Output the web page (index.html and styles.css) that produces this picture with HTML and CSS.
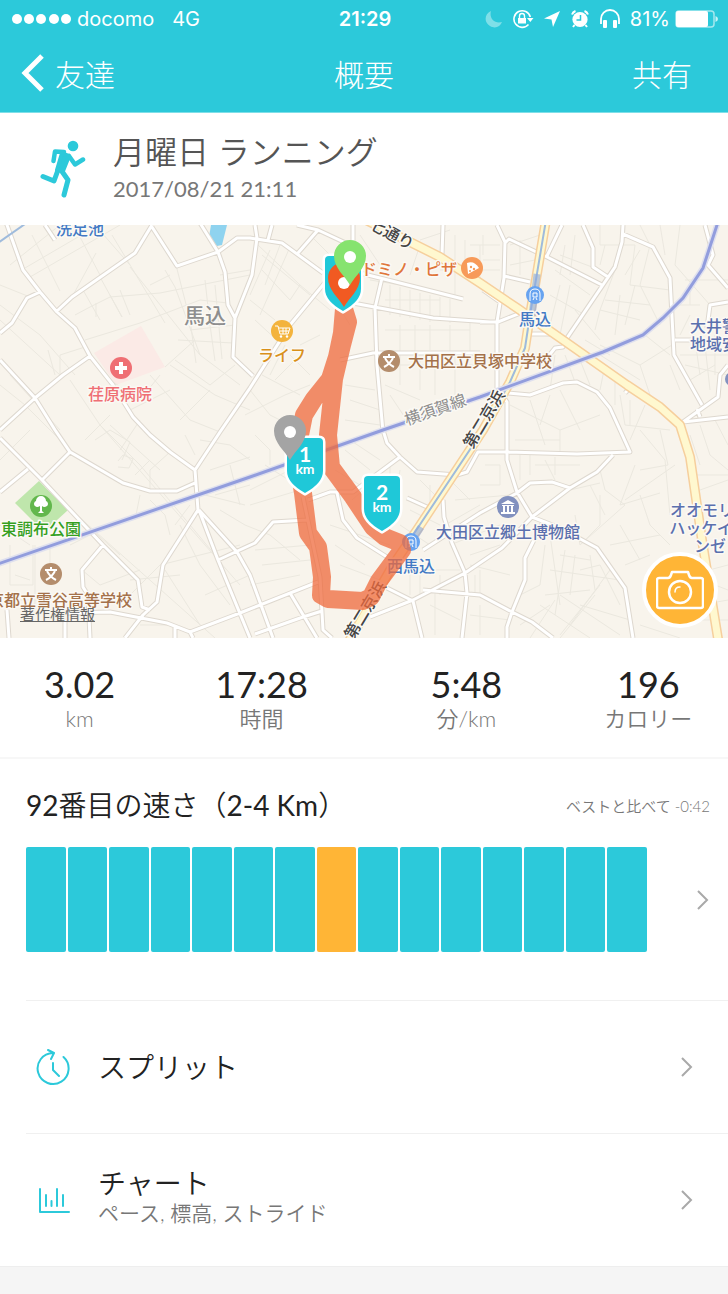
FILE: index.html
```html
<!DOCTYPE html>
<html lang="ja">
<head>
    <meta charset="UTF-8">
    <meta name="viewport" content="width=device-width, initial-scale=1.0">
    <title>概要</title>
    <link rel="stylesheet" href="styles.css">
</head>
<body>
    <header class="header">
        <div class="status">
            <div class="status-left">
                <svg width="60" height="12" viewBox="0 0 60 12" fill="#fff">
                    <circle cx="5" cy="6" r="5"/><circle cx="17" cy="6" r="5"/><circle cx="29" cy="6" r="5"/><circle cx="42" cy="6" r="5"/><circle cx="54" cy="6" r="5"/>
                </svg>
                <span class="carrier">docomo</span>
                <span>4G</span>
            </div>
            <div class="clock">21:29</div>
            <div class="status-right">
                <svg width="18" height="18" viewBox="0 0 18 18"><path d="M6 1C-1 4-1 13 5 16 10 19 15 17 17 12 9 14 4 8 6 1z" fill="#7fdfe8"/></svg>
                <svg width="22" height="20" viewBox="0 0 22 20" fill="none" stroke="#fff">
                    <path d="M16.500 15.500A8.300 8.300 0 1 1 18.300 8" stroke-width="1.600"/>
                    <path d="M15 9h6.500l-3.200 4z" fill="#fff" stroke="none"/>
                    <rect x="6" y="9" width="8" height="5.500" fill="#fff" stroke="none"/>
                    <path d="M7.500 9V7a2.500 2.500 0 0 1 5 0v2" stroke-width="1.400"/>
                </svg>
                <svg width="18" height="18" viewBox="0 0 18 18"><path d="M17 1L1 8.500l7.500 1L10 17z" fill="#fff"/></svg>
                <svg width="20" height="20" viewBox="0 0 20 20">
                    <circle cx="10" cy="10.500" r="7.600" fill="#fff"/>
                    <path d="M2 5.500A6 6 0 0 1 5.500 2M18 5.500A6 6 0 0 0 14.500 2M4.500 16l-1.500 2M15.500 16l1.500 2" fill="none" stroke="#fff" stroke-width="2"/>
                    <path d="M10.500 6v5H6.500" fill="none" stroke="#2cc9da" stroke-width="1.500"/>
                </svg>
                <svg width="22" height="20" viewBox="0 0 22 20">
                    <path d="M2 15V10a9 9 0 0 1 18 0v5" fill="none" stroke="#fff" stroke-width="1.800"/>
                    <rect x="4" y="11" width="4" height="8" rx="1" fill="#fff"/>
                    <rect x="14" y="11" width="4" height="8" rx="1" fill="#fff"/>
                </svg>
                <span class="percent">81%</span>
                <svg width="43" height="18" viewBox="0 0 43 18">
                    <rect x="1" y="1" width="38" height="16" rx="3" fill="none" stroke="#a5e8ee" stroke-width="1.500"/>
                    <rect x="1" y="1" width="32" height="16" rx="2" fill="#fff"/>
                    <path d="M40.500 6q2.500 1 2.500 3t-2.500 3z" fill="#c8f2f5"/>
                </svg>
            </div>
        </div>
        <nav class="nav">
            <a class="back" href="#">
                <svg width="24" height="38" viewBox="0 0 24 38"><path d="M21 2L4 19l17 17" fill="none" stroke="#fff" stroke-width="5"/></svg>
                友達
            </a>
            <h1>概要</h1>
            <a class="share" href="#">共有</a>
        </nav>
    </header>

    <section class="activity">
        <svg width="46" height="58" viewBox="0 0 46 58" fill="none" stroke="#2cc9da" stroke-linecap="round" stroke-linejoin="round">
            <circle cx="33" cy="6" r="5.300" fill="#2cc9da" stroke="none"/>
            <path d="M22 13l7 3-6 15-6-1z" fill="#2cc9da" stroke-width="4"/>
            <path d="M13.500 21l1.500-9.500 9 .5M29 16l6 8.500 8-5" stroke-width="4.500"/>
            <path d="M18 30l-4 11-11-4.500" stroke-width="5"/>
            <path d="M21 30l7 10-4 15" stroke-width="5"/>
        </svg>
        <div>
            <h2>月曜日 ランニング</h2>
            <time datetime="2017-08-21T21:11">2017/08/21 21:11</time>
        </div>
    </section>

    <section class="map">
        <svg class="map-canvas" viewBox="0 0 728 413" preserveAspectRatio="xMidYMid slice">
            <defs>
                <path id="roads" d="M3 -10L7 0 23 45 40 67 57 87 75 103 90 131 113 160 133 192 150 210 170 227 195 245 198 285 163 340 157 377 143 390 125 413
                    M195 245L220 207 250 163 290 100 327 55M152 0L135 28 72 72 57 86M152 2L177 41 218 27 237 13 250 13 282 18 323 48
                    M200 -2L218 27 225 47 228 80 235 93 233 132 253 151M235 93L252 50 257 13 255 0M40 67L27 73 12 98 0 108
                    M0 135L35 173 55 205 70 227 123 258 150 266 177 266 197 257M90 131L63 150 35 173 0 205M0 213L42 255 103 320 138 355 142 382 150 385
                    M70 227L42 255M28 244L0 267M103 320L82 345 83 362 88 370 90 413M67 388L110 387 167 398 190 407 240 388 318 357
                    M199 285L218 335 250 413M199 285L237 327 250 350 273 413M218 335L255 318 273 297 307 295M7 385L9 413M65 395V413M175 402V413M190 407L193 413
                    M255 409L303 392 322 386M290 368L317 413M303 272L320 352 323 405 332 413M308 275L330 267 353 267 400 232 417 247 457 250 467 247 478 227 507 227 577 229 630 227 610 183 597 167 577 157 563 158 530 170 507 168
                    M383 205L387 218 400 232M337 268L343 295 357 313 387 332M407 273L427 282M443 275L444 292 452 318 465 348 467 368 462 413
                    M370 392L413 375 465 348 502 323 532 292 570 263 597 247 613 230M387 363L413 376 422 413M423 365L480 370 512 387 532 397 553 413
                    M423 325L480 288 517 268 530 258 552 257 570 263M507 205V235L517 267 532 292 560 303 597 323 625 363 633 413M543 297L525 333V355L512 387 507 402V413
                    M497 0L505 17 504 53 497 97V163L507 177V205M505 18L509 14 547 32 602 60M562 0L547 31M583 0L593 23V42L608 52M623 0L622 17 615 42 567 113 563 122 555 123 547 133
                    M623 9L653 22 670 53 674 130 702 180M675 115H693M705 0L713 30 708 40 728 63M728 77L710 80 707 103M683 197L718 172 720 150 728 140M683 197L728 192M697 184L700 192
                    M625 168L631 162M504 51L530 57M480 97H498L523 87M483 65L500 77M528 109H550M297 0L318 5 350 20M318 5L298 28M272 0L268 15M353 0V20M443 0L442 30
                    M360 48L463 74M353 78L433 93 490 97M382 53L375 83 377 140 383 207M340 135L373 128H480M45 0L55 15"/>
                <path id="highway" d="M360 -8L410 17 440 32 480 58 517 83 563 115 627 160 660 182 680 200 690 232 702 315 719 420"/>
                <path id="keihin" d="M546 -5L530 90 525 123 510 157 483 205 417 305 393 340 348 418"/>
                <path id="shield" d="M-18 -29Q-18 -33 -14 -33H14Q18 -33 18 -29V0Q18 12 0 22Q-18 12 -18 0z"/>
                <path id="pin" d="M0 22C-5 13 -16 5 -16 -7A16 16 0 1 1 16 -7C16 5 5 13 0 22z"/>
            </defs>
            <rect width="728" height="413" fill="#f8f4ec"/>
            <path d="M211 0h16l-5 20-5 1-8-9z" fill="#8fd3ef"/>
            <path d="M94 128l47-27 24 41-49 18z" fill="#fbeae6"/>
            <path d="M15 278l24-22 29 29-24 22z" fill="#bfe6ac"/>

            <!-- side streets -->
            <path class="lane" d="M10 40L60 0M25 43L90 5M30 52L120 0M32 10L60 66M80 12L100 50M95 0L130 40M112 10L165 98M130 42L200 130M72 72L96 28M83 65L100 95M100 52L122 92M0 80L40 110 75 150M0 95L60 150M0 60L30 72
                M75 90L90 82 110 72 160 68 250 50M85 115L140 98 200 75 228 78M110 70L122 92M120 65L130 90M96 78V92M165 45L175 62 200 130M176 40L190 95 196 138M205 55L210 100 215 136M215 60L222 134M178 115L233 118M190 105L235 100M165 142L195 115M150 60L170 50M220 50L250 45
                M170 140L215 170 250 185M150 150L190 195 220 207M160 150L140 175 110 155M175 135L210 160 235 140M200 130L240 160M130 185L170 165M180 195L210 165M0 160L25 180 70 225M10 150L60 205M70 155L100 200 140 240 215 330M110 200L160 245 M85 215L110 190
                M120 225L140 195M60 150V130L85 122M48 125L55 150M0 235L30 205M95 215L110 205 130 217 122 235M118 236l5-6 10 4-4 9-11-1M135 250L150 235M170 227L150 245 150 266M200 215L230 220 250 235M210 245L250 232M195 230L185 210M140 270L135 295M150 275L165 290 170 310
                M42 255L60 275 215 413M45 262L120 330M100 200L240 360M0 300L30 320M70 320L110 300M82 345L100 360 140 345M130 355L180 350M120 380L160 340M160 340L240 320M165 345L200 400M180 300L200 340 230 380M175 300L190 280M10 320V360H33V320M15 350L30 355M10 375H60M35 320V380M50 320V360M205 370L250 350M140 400H170M215 270L250 260M220 285L245 300M205 270L245 280M230 240L240 280
                M258 20L300 60M262 30L310 70M262 45L290 75 300 60M250 75L275 95M270 25L250 70M280 20L265 60M290 22L260 90M310 10L340 40M325 60L350 100M300 60L330 85M255 95L280 118M262 150L300 170M250 165L270 190 300 205M245 190L285 170 310 160M300 120L320 110M290 130L310 150M270 150L285 120M275 155L300 130M255 210L270 225 270 240M265 240L300 262M250 265L300 240M250 280L300 265M245 300L270 310 300 335M255 325L310 320M262 340L310 335M250 360L300 350M330 300L390 320M335 320L365 340M340 340L380 355M350 215L380 235M345 225L370 245M335 245L360 260M352 275L380 250M390 240V265M400 245L395 275
                M360 10L380 40M370 55L420 63M390 60V90M400 62V92M410 65V93M420 68V95M430 70V97M440 72V96M450 74V98M385 75H440M385 105H470M400 100V128M415 100V128M430 100V125M450 100V128M470 98V128M390 140H480M400 130V160M420 135V165M435 135V170M455 132V170M345 160L375 165M350 175L380 185M345 195L380 200M385 160L420 175M390 170L410 200M420 15L450 5M420 20L410 50M455 10V35M465 15V45M480 20V55M440 45H500M455 45V70M470 20H500M483 35H500M483 10V30
                M410 285L440 300M400 300L430 320M430 260V285M420 255L440 275M450 255L470 275M445 300L480 280M400 345H460M410 345V370M420 345V370M440 350V370M450 320L500 300M470 330L500 320M470 340L510 350M475 350V370M480 345V370M455 275L510 270M470 390L510 395M430 380L460 395M480 380V410M435 365V410
                M510 20L540 10M510 40L535 35M520 15V50M560 30L600 45M555 45L590 70M565 20L560 50M575 10L570 50M550 70L585 90M560 60L550 100M570 60L560 110M600 0V20H635L630 60 670 65M605 20L600 40M640 25L625 50M650 20L640 60 660 100M615 45L600 85 640 95M605 75L650 80M600 85L595 105M620 70L615 110M635 60L625 100M575 85L600 115M585 115L610 130M600 120L640 140 672 120M645 110L670 130M640 140L650 170M600 130L640 155M555 130L550 165M565 130L575 157M580 135L590 160M605 140L600 165M615 150L615 180M560 165L580 205M530 175L545 220M510 180L560 205M550 170L540 200M620 170L625 200 670 205M630 175V200M645 180L630 215M600 190L560 205 560 228
                M640 0L650 20M660 0L665 30M680 0L675 40 710 80M685 55H728M690 60V80M675 80H700M680 130H728M685 140L728 150M695 115L700 150M705 120L710 165M715 110V150M690 155L715 140M670 140L680 165M690 90L680 110M710 100L728 105M700 200L710 230 728 245M715 195L728 220M690 210L700 240M695 250H728M700 265L728 255M640 205L665 235 670 290M625 275L675 240M635 240L620 280 660 268M660 205L668 240 640 245M600 245L605 265 625 280 580 320M570 265L600 258M545 235L555 255M535 240H580M520 230V255M530 230V250M555 232V250M515 215H560M485 240H500V260H480
                M575 290L580 320 600 300M590 260L605 290M600 270V300M545 320L540 360 520 370M550 310L560 380M560 330L590 335M565 325L555 390M575 330L570 370M580 345L600 340 620 380M550 345L620 355M545 370L590 365M590 330L595 365M600 360L560 410M610 345L570 400M560 370L620 410M580 380L630 395M540 380L590 413M555 375L530 413M520 400L550 380M595 370L560 413M640 270L650 300 670 320M620 300L640 335M610 320L660 310M625 340L650 330M690 350L728 340M705 320L715 360 728 365M640 400L680 413M690 395H728M700 380L728 375"/>

            <use href="#roads" class="road-edge"/>
            <use href="#roads" class="road"/>
            <path d="M-2 18L25 -1" class="subway"/>
            <use href="#highway" class="highway-edge"/>
            <use href="#keihin" class="highway-edge"/>
            <use href="#highway" class="highway"/>
            <use href="#keihin" class="highway"/>
            <path class="subway" d="M546 -5L530 90 525 123 510 157 483 205 413 310"/>
            <path class="rail-edge" d="M-5 340L250 252 383 205 480 172 603 127 643 110 663 93 683 73 703 43 718 -3"/>
            <path class="rail" d="M-5 340L250 252 383 205 480 172 603 127 643 110 663 93 683 73 703 43 718 -3"/>
            <path d="M537 49l-5 42M421 302l-9 14" stroke="#8ba6dc" stroke-opacity=".6" stroke-width="7"/>

            <!-- places -->
            <g class="place hospital">
                <circle cx="121" cy="143" r="11"/>
                <path d="M121 137v12M115 143h12" stroke="#fff" stroke-width="4"/>
                <text x="120" y="175">荏原病院</text>
            </g>
            <g class="place shop">
                <circle cx="282" cy="106" r="11"/>
                <path d="M275 101h3l2 8h8l2-6h-11M280 106h9M283 103v6M286 103v6" fill="none" stroke="#fff"/>
                <circle cx="281" cy="111.500" r="1.200" class="knob"/><circle cx="287" cy="111.500" r="1.200" class="knob"/>
                <text x="282" y="136">ライフ</text>
            </g>
            <g class="place pizza">
                <circle cx="472" cy="43" r="11"/>
                <path d="M467 38q7-3 12 5l-11 6z" fill="#fff"/>
                <circle cx="471" cy="42" r="1.200"/><circle cx="474" cy="44" r="1.200"/><circle cx="470" cy="46" r="1"/>
                <text x="409" y="50">ドミノ・ピザ</text>
            </g>
            <g class="place school">
                <circle cx="389" cy="136" r="11"/>
                <path class="mark" d="M383 132h12M389 129v3M385 133q3 6 9 9M393 133q-3 6-9 9"/>
                <text x="480" y="142">大田区立貝塚中学校</text>
            </g>
            <g class="place school">
                <circle cx="51" cy="349" r="11"/>
                <path class="mark" d="M45 345h12M51 342v3M47 346q3 6 9 9M55 346q-3 6-9 9"/>
                <text x="60" y="381">京都立雪谷高等学校</text>
            </g>
            <g class="place park">
                <circle cx="41" cy="281" r="11"/>
                <path d="M35 281a3 3 0 0 1 1-5 5 5 0 0 1 10 0 3 3 0 0 1 1 5q-3 2-5 0v5l2 2h-6l2-2v-5q-3 2-5 0z" fill="#fff"/>
                <text x="41" y="310">東調布公園</text>
            </g>
            <g class="place museum">
                <circle cx="508" cy="282" r="11"/>
                <path d="M501 279l7-4 7 4zM502 280h12v1h-12zM503 281h2v6h-2zM507 281h2v6h-2zM511 281h2v6h-2zM501 287h14v2h-14z" fill="#fff"/>
                <text x="508" y="313">大田区立郷土博物館</text>
            </g>
            <g class="place station">
                <circle cx="535" cy="70" r="9"/>
                <path d="M530 76v-7q0-5 5-5t5 5v7M533 68h4v4h-4zM533 75l1-2M537 75l-1-2" fill="none" stroke="#fff"/>
                <text x="535" y="100">馬込</text>
            </g>
            <g class="place station">
                <circle cx="411" cy="317" r="9"/>
                <path d="M406 323v-7q0-5 5-5t5 5v7M409 315h4v4h-4zM409 322l1-2M413 322l-1-2" fill="none" stroke="#fff"/>
                <text x="411" y="347">西馬込</text>
            </g>
            <g class="place museum">
                <circle cx="732" cy="154" r="7"/>
                <text x="714" y="107">大井警</text>
                <text x="714" y="125">地域安</text>
                <text x="702" y="291">オオモリ</text>
                <text x="701" y="309">ハッケイ</text>
                <text x="710" y="327">ンゼ</text>
            </g>
            <text class="area" x="205" y="98">馬込</text>
            <text class="pond" x="80" y="10">洗足池</text>
            <text class="line-name" transform="translate(437 190) rotate(-19)">横須賀線</text>
            <text class="street" transform="translate(389 14) rotate(28)">七通り</text>
            <text class="street" transform="translate(489 197) rotate(-59)">第二京浜</text>
            <text class="street" transform="translate(370 388) rotate(-59)">第二京浜</text>

            <!-- route -->
            <path class="route" d="M344 84L342 108 337 132 330 154 314 174 304 190 300 210 298 238 303 268 308 308 318 322 322 352 321 370 328 374 363 376 371 372 379 356 402 325 400 318 385 312 373 302 353 272 331 242 328 210 334 154 342 120 348 97z"/>
            <g transform="translate(343 64)"><use href="#shield" class="shield"/></g>
            <g transform="translate(344 60)"><use href="#pin" fill="#f15a22"/><circle cy="-2" r="6" fill="#fff"/></g>
            <g transform="translate(350 38)"><use href="#pin" fill="#86e36f"/><circle cy="-6" r="6" fill="#fff"/></g>
            <g class="km" transform="translate(305 246)"><use href="#shield" class="shield"/><text class="num" y="-9">1</text><text y="3">km</text></g>
            <g class="km" transform="translate(382 284)"><use href="#shield" class="shield"/><text class="num" y="-9">2</text><text y="3">km</text></g>
            <g transform="translate(290 213)"><use href="#pin" fill="#a4a4a4"/><circle cy="-6" r="6" fill="#fff"/></g>
        </svg>
        <a class="legal" href="#">著作権情報</a>
        <button class="camera" type="button" aria-label="写真">
            <svg width="48" height="40" viewBox="0 0 48 40" fill="none" stroke="#fff" stroke-width="2.500" stroke-linejoin="round">
                <path d="M3 8h9q2 0 3-3l1-3h16l1 3q1 3 3 3h9q2 0 2 2v26q0 2-2 2H3q-2 0-2-2V10q0-2 2-2z"/>
                <circle cx="24" cy="22" r="11"/>
                <path d="M19 22q0-5 5-5" stroke-linecap="round" stroke-width="1.500"/>
            </svg>
        </button>
    </section>

    <section class="stats">
        <div><strong>3.02</strong><span>km</span></div>
        <div><strong>17:28</strong><span>時間</span></div>
        <div><strong>5:48</strong><span>分/km</span></div>
        <div><strong>196</strong><span>カロリー</span></div>
    </section>

    <a class="rank" href="#">
        <div class="rank-head">
            <h3>92<span>番目の速さ（</span>2-4 Km<span>）</span></h3>
            <small>ベストと比べて -0:42</small>
        </div>
        <div class="rank-body">
            <div class="bars">
                <i></i><i></i><i></i><i></i><i></i><i></i><i></i><i class="current"></i><i></i><i></i><i></i><i></i><i></i><i></i><i></i>
            </div>
            <svg class="chevron" width="14" height="22" viewBox="0 0 14 22"><path d="M2 2l9 9-9 9"/></svg>
        </div>
    </a>

    <a class="row" href="#">
        <svg class="row-icon" width="36" height="38" viewBox="0 0 36 38">
            <path d="M18 5A15.500 15.500 0 1 0 28.500 9M13 2l6 3-3 6M18 15v7l6 6"/>
        </svg>
        <div class="row-text"><h3>スプリット</h3></div>
        <svg class="chevron" width="14" height="22" viewBox="0 0 14 22"><path d="M2 2l9 9-9 9"/></svg>
    </a>
    <a class="row" href="#">
        <svg class="row-icon" width="36" height="38" viewBox="0 0 36 38">
            <path d="M5 8v23h29M11 14v11M16.500 20v5M22 8v17M28 14v11"/>
        </svg>
        <div class="row-text">
            <h3>チャート</h3>
            <p>ペース, 標高, ストライド</p>
        </div>
        <svg class="chevron" width="14" height="22" viewBox="0 0 14 22"><path d="M2 2l9 9-9 9"/></svg>
    </a>
    <footer class="footer"></footer>
</body>
</html>
```
FILE: styles.css
```css
* {
    box-sizing: border-box;
}
body {
    display: flex;
    flex-direction: column;
    min-height: 100vh;
    margin: 0;
    background: #fff;
    color: #222;
    font-family: Lato, "Noto Sans CJK JP", sans-serif;
}
h1, h2, h3, p {
    margin: 0;
    font-weight: 350;
}
a {
    color: inherit;
    text-decoration: none;
}
svg {
    display: block;
    flex-shrink: 0;
}

/* header */
.header {
    height: 113px;
    background: #2cc9da;
    border-bottom: 1px solid #7fdfe8;
    color: #fff;
}
.status {
    display: grid;
    grid-template-columns: 1fr auto 1fr;
    align-items: center;
    height: 38px;
    padding: 0 10px 0 12px;
    font-family: Inter, sans-serif;
    font-size: 20px;
    font-weight: 400;
}
.status-left, .status-right {
    display: flex;
    align-items: center;
}
.carrier {
    margin: 0 18px 0 5px;
}
.clock {
    font-weight: 600;
}
.status-right {
    justify-content: flex-end;
    gap: 9px;
}
.percent {
    margin-right: -4px;
}
.nav {
    display: grid;
    grid-template-columns: 1fr auto 1fr;
    align-items: center;
    height: 70px;
    padding: 0 36px;
    font-size: 30px;
    font-weight: 300;
}
.nav h1 {
    font-size: 30px;
    font-weight: 300;
}
.back {
    display: flex;
    align-items: center;
    gap: 10px;
    margin-left: -15px;
}
.share {
    justify-self: end;
}

/* activity */
.activity {
    display: flex;
    align-items: center;
    gap: 27px;
    height: 112px;
    padding: 0 40px;
}
.activity h2 {
    color: #555;
    font-size: 32px;
    line-height: 40px;
}
.activity time {
    display: block;
    color: #777;
    font-size: 22px;
    line-height: 34px;
}

/* map */
.map {
    position: relative;
    height: 413px;
    overflow: hidden;
}
.map-canvas {
    width: 100%;
    height: 100%;
    font-family: "Noto Sans CJK JP", sans-serif;
    font-size: 16px;
    font-weight: 500;
    text-anchor: middle;
}
.map-canvas text {
    paint-order: stroke;
    stroke: #fbf9f4;
    stroke-width: 3px;
    stroke-linejoin: round;
}
.lane {
    fill: none;
    stroke: #ebe8df;
    stroke-width: 1;
}
.road, .road-edge, .highway, .highway-edge {
    fill: none;
    stroke-linejoin: round;
}
.road-edge {
    stroke: #ded8cf;
    stroke-width: 5;
}
.road {
    stroke: #fff;
    stroke-width: 3;
}
.highway-edge {
    stroke: #f6cf9d;
    stroke-width: 10;
}
.highway {
    stroke: #fff8cf;
    stroke-width: 7;
}
.subway {
    fill: none;
    stroke: #9fbbdc;
    stroke-width: 2;
}
.rail, .rail-edge {
    fill: none;
    stroke: #929ddd;
    stroke-width: 3;
}
.rail-edge {
    stroke: #dfe0ee;
    stroke-width: 6;
}
.hospital {
    fill: #ef6f74;
}
.shop {
    fill: #f3b33d;
}
.shop text {
    fill: #d9901a;
}
.pizza {
    fill: #f79a59;
}
.pizza text {
    fill: #e0763a;
}
.school {
    fill: #b48d6c;
}
.school text {
    fill: #a4714a;
}
.park {
    fill: #62b74c;
}
.park text {
    fill: #35a01f;
}
.museum {
    fill: #8291bf;
}
.museum text {
    fill: #5b70ae;
}
.station {
    fill: #67a3f0;
}
.station text, .pond {
    fill: #4379c4;
}
.knob {
    fill: #fff;
}
.mark {
    fill: none;
    stroke: #fff;
    stroke-width: 2;
}
.area {
    fill: #8e8e8e;
    font-size: 21px;
}
.line-name {
    fill: #8c8c8c;
    font-weight: 400;
}
.street {
    fill: #444;
}
.route {
    fill: none;
    stroke: #ef6a3c;
    stroke-opacity: .75;
    stroke-width: 18;
    stroke-linejoin: round;
}
.shield {
    fill: #1fc8d8;
    stroke: #fff;
    stroke-width: 5;
    paint-order: stroke;
}
.map-canvas .km text {
    fill: #fff;
    stroke: none;
    font-family: Lato, sans-serif;
    font-size: 14px;
    font-weight: 700;
}
.map-canvas .km .num {
    font-size: 21px;
}
.legal {
    position: absolute;
    left: 20px;
    bottom: 14px;
    color: #666;
    font-size: 15px;
    line-height: 20px;
    text-decoration: underline;
}
.camera {
    position: absolute;
    right: 10px;
    bottom: 10px;
    display: flex;
    align-items: center;
    justify-content: center;
    width: 76px;
    height: 76px;
    padding: 0;
    background: #ffb536;
    border: 4px solid #fff;
    border-radius: 50%;
}

/* stats */
.stats {
    display: grid;
    grid-template-columns: 7fr 9fr 9fr 7fr;
    height: 121px;
    padding-top: 24px;
    border-bottom: 2px solid #f7f7f7;
    text-align: center;
}
.stats strong {
    display: block;
    font-size: 36px;
    font-weight: 400;
    line-height: 44px;
}
.stats span {
    display: block;
    color: #777;
    font-size: 22px;
    font-weight: 350;
    line-height: 26px;
}

/* rank */
.rank {
    height: 241px;
    padding: 24px 18px 0 26px;
}
.rank-head {
    display: flex;
    align-items: center;
    justify-content: space-between;
    height: 44px;
}
.rank h3, .row h3 {
    font-size: 28px;
    line-height: 36px;
}
.rank h3 {
    font-weight: 400;
}
.rank h3 span {
    font-weight: 350;
}
.rank small {
    color: #777;
    font-size: 15px;
    font-weight: 350;
}
.rank-body {
    display: flex;
    align-items: center;
    justify-content: space-between;
    gap: 49px;
    margin-top: 20px;
}
.bars {
    display: grid;
    grid-template-columns: repeat(15, 1fr);
    gap: 2px;
    flex: 1;
    height: 105px;
}
.bars i {
    background: #2cc9da;
    border-radius: 2px;
}
.bars .current {
    background: #ffb536;
}
.chevron {
    fill: none;
    stroke: #a9a9a9;
    stroke-width: 2;
}

/* rows */
.row {
    display: flex;
    align-items: center;
    height: 133px;
    margin-left: 26px;
    padding: 0 34px 0 9px;
    border-top: 1px solid #f0f0f0;
}
.row-icon {
    margin-right: 27px;
    fill: none;
    stroke: #2cc9da;
    stroke-width: 2;
    stroke-linecap: round;
    stroke-linejoin: round;
}
.row-text {
    flex: 1;
}
.row p {
    padding-bottom: 10px;
    color: #777;
    font-size: 21px;
    line-height: 24px;
}
.footer {
    flex: 1;
    min-height: 26px;
    background: #f5f5f5;
    border-top: 1px solid #eee;
}
```
